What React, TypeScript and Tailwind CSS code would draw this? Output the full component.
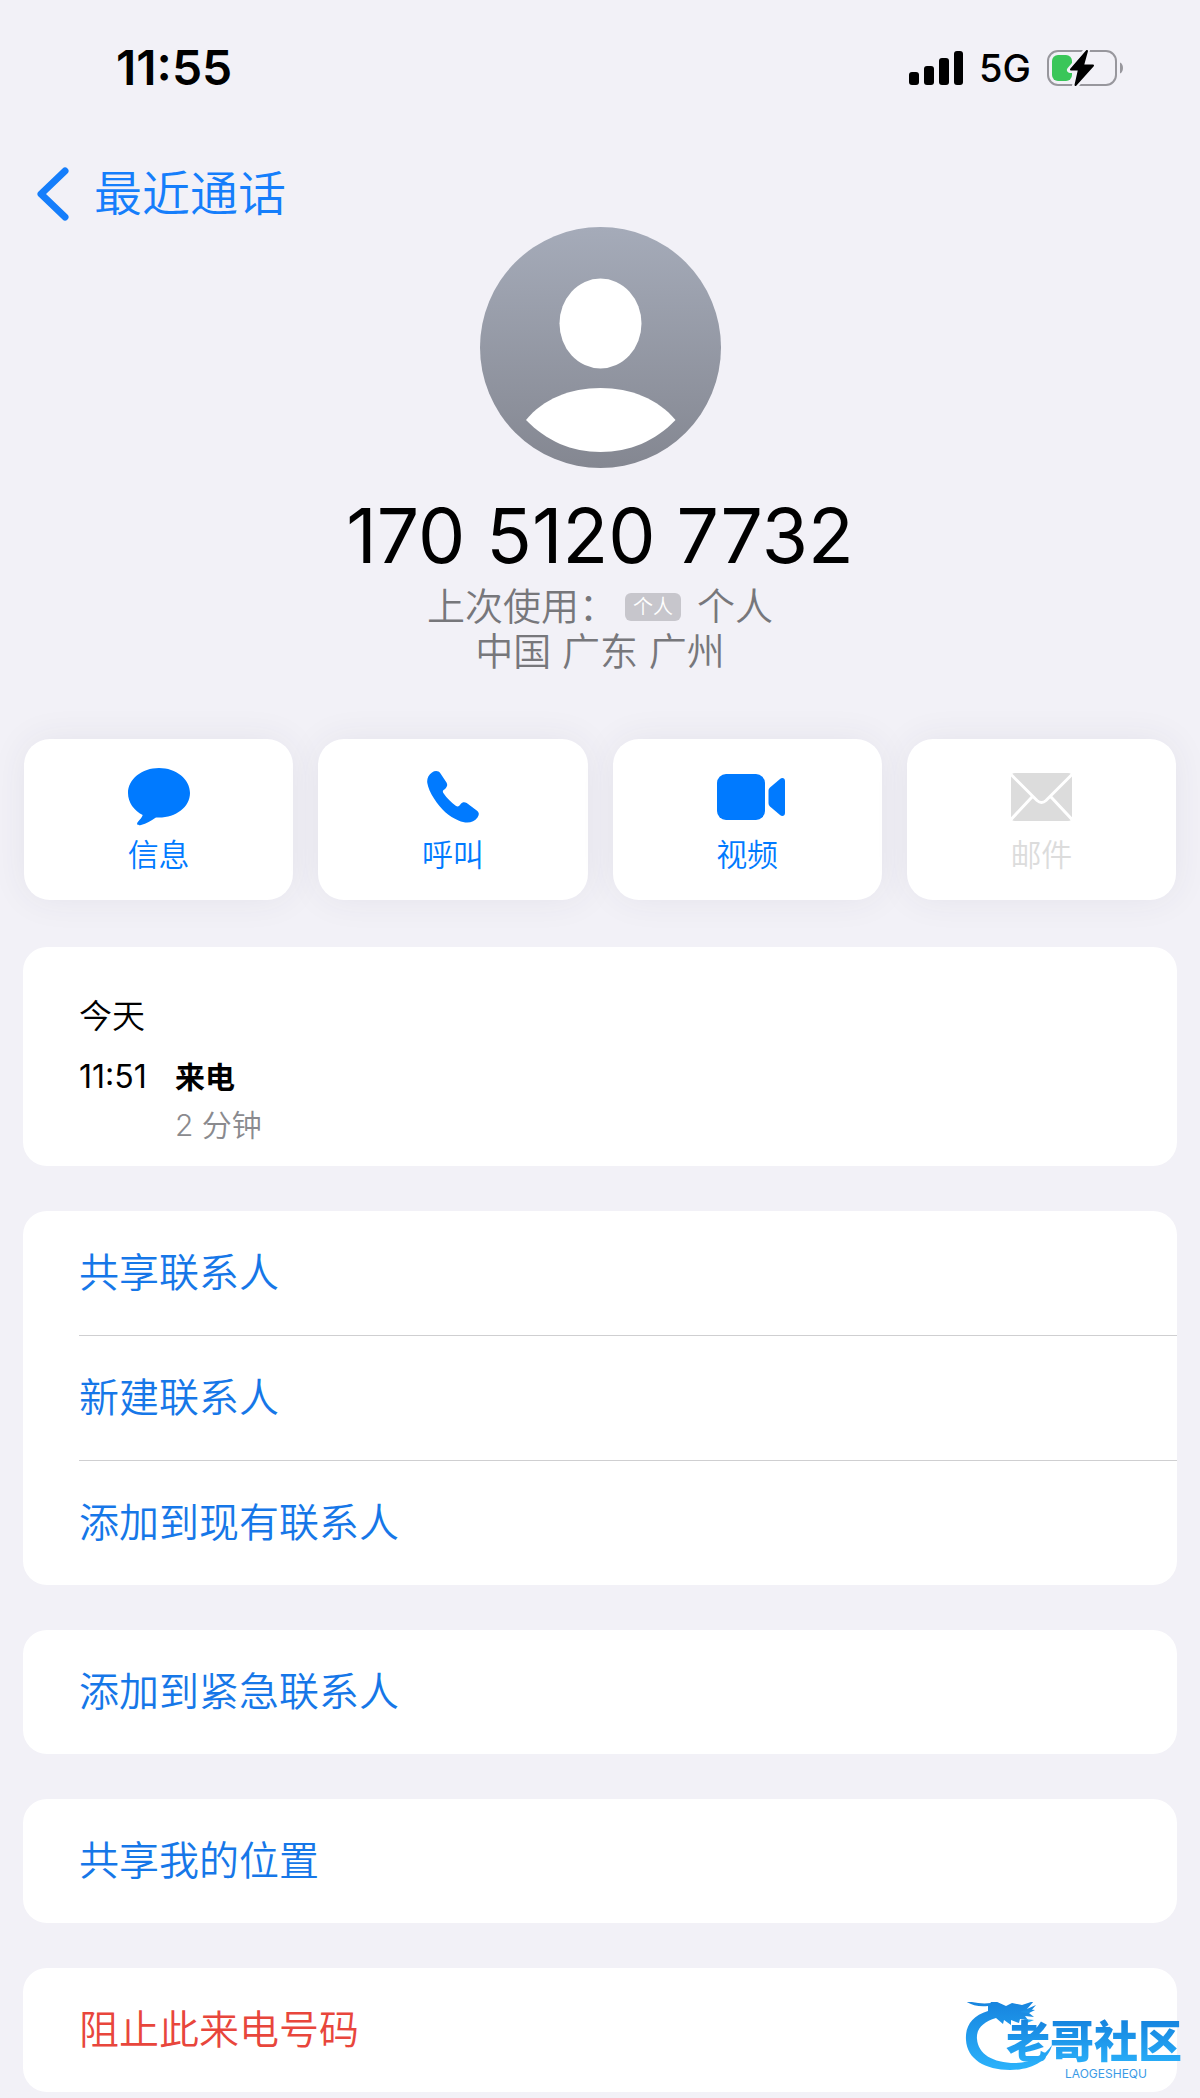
import type { ReactNode } from 'react'

type Action = {
    name: string
    icon: ReactNode
    disabled?: boolean
}

type LinkGroup = {
    items: string[]
    danger?: boolean
}

const actions: Action[] = [
    { name: '信息', icon: <MessageIcon /> },
    { name: '呼叫', icon: <PhoneIcon /> },
    { name: '视频', icon: <VideoIcon /> },
    { name: '邮件', icon: <MailIcon />, disabled: true },
]

const groups: LinkGroup[] = [
    { items: ['共享联系人', '新建联系人', '添加到现有联系人'] },
    { items: ['添加到紧急联系人'] },
    { items: ['共享我的位置'] },
    { items: ['阻止此来电号码'], danger: true },
]

function SignalIcon() {
    return (
        <svg width="54" height="35" viewBox="0 0 54 35" aria-hidden="true">
            <rect x="0" y="21" width="10" height="13" rx="3" />
            <rect x="15" y="15" width="10" height="19" rx="3" />
            <rect x="30" y="7" width="10" height="27" rx="3" />
            <rect x="45" y="0" width="9" height="34" rx="3" />
        </svg>
    )
}

function BatteryIcon() {
    return (
        <svg width="77" height="40" viewBox="0 0 77 40" aria-hidden="true">
            <rect x="1" y="3" width="68" height="34" rx="10" fill="none" stroke="#98979d" strokeWidth="2" />
            <path d="M73 14.500c4 1.500 4 9.500 0 11z" fill="#98979d" />
            <rect x="5" y="7" width="20" height="26" rx="6" fill="#3ac659" />
            <path
                d="M40 2 23 22h9l-4 16 18-21H36z"
                fill="#000"
                stroke="#f2f1f7"
                strokeWidth="6"
                strokeLinejoin="round"
                paintOrder="stroke"
            />
            <path d="M40 3 24 21.500h8L28.500 37 46 17.500H36z" stroke="#000" strokeWidth="2" strokeLinejoin="round" />
        </svg>
    )
}

function Avatar() {
    return (
        <svg width="241" height="241" viewBox="0 0 241 241" role="img" aria-label="头像">
            <defs>
                <linearGradient id="avatar" x1="0" y1="0" x2="0" y2="1">
                    <stop offset="0" stopColor="#a5abb9" />
                    <stop offset="1" stopColor="#848791" />
                </linearGradient>
            </defs>
            <circle cx="120.500" cy="120.500" r="120.500" fill="url(#avatar)" />
            <ellipse cx="120.500" cy="96.500" rx="41" ry="45" fill="#fff" />
            <path d="M46 193c17-21 44-32 74.500-32s57.500 11 75 32c-20 21-46 32-75 32s-54-11-74.500-32z" fill="#fff" />
        </svg>
    )
}

function MessageIcon() {
    return (
        <svg width="62" height="58" viewBox="0 0 62 58" fill="currentColor" aria-hidden="true">
            <path d="M31 0C48 0 62 11 62 25S48 49.500 31 49.500c-1.500 0-2.500-.2-3.500.2-4.500 3-9 6-14.500 7.300-3.500.8-5-.8-3-3.200 2-2.300 4-4.300 4.700-6.800C6 42.500 0 34.500 0 25 0 11 14 0 31 0z" />
        </svg>
    )
}

function PhoneIcon() {
    return (
        <svg width="52" height="52" viewBox="0 0 52 52" fill="currentColor" aria-hidden="true">
            <path d="M5 1.500C8-.5 11.500-.5 13.500 2.500l6 9c1.200 2 .8 4-1 6-2.500 2-3.500 2.500-1.800 5 3.300 4.700 7.300 8.800 12 12.300 2.300 1.500 3.500.5 5-1.800 1.500-2 3.800-2.500 6-1l10 7.500c2.500 2 2.800 4 .8 7-4 5.500-11 6.500-19 3C22 45.500 14 38.500 7 27.500 3.500 22 1 16.500.3 12-.3 7.500 1.500 4 5 1.500z" />
        </svg>
    )
}

function VideoIcon() {
    return (
        <svg width="76" height="46" viewBox="-8 0 76 46" fill="currentColor" aria-hidden="true">
            <rect x="0" y="0" width="48" height="46" rx="9" />
            <path d="M51.500 17c0-1.500.5-2.500 1.500-3.400L63 5c2.200-1.800 5-.8 5 2v32c0 2.800-2.800 3.800-5 2l-10-8.500c-1-.9-1.500-1.900-1.500-3.500z" />
        </svg>
    )
}

function MailIcon() {
    return (
        <svg width="61" height="48" viewBox="0 0 61 48" aria-hidden="true">
            <rect width="61" height="48" rx="4" fill="currentColor" />
            <path
                d="M0 1.500 26 27.500q4.500 4 9 0L61 1.500M0 46.500 21 24M61 46.500 40 24"
                fill="none"
                stroke="#fff"
                strokeWidth="3"
            />
        </svg>
    )
}

function DragonMark() {
    return (
        <svg width="90" height="70" viewBox="0 0 90 70" aria-hidden="true">
            <defs>
                <linearGradient id="dragon" x1="0" y1="0" x2="0" y2="1">
                    <stop offset="0" stopColor="#1580dc" />
                    <stop offset="1" stopColor="#2bb2fb" />
                </linearGradient>
            </defs>
            <g fill="url(#dragon)">
                <path d="M24 9C8 14 1 24 2 38c1 19 19 30 44 30 22 0 38-9 42-25-7 11-21 18-37 18-22 0-37-9-38-24-1-10 6-17 19-21l7 6 1-4 7 5v-5l8 3 1-4 8 1-3-4 9 1-5-4 6-3-8-1 7-8-12 4-10-2-6 3-11-5-9-6 5 8c-9 1-17 0-27-3 6 5 14 7 24 6z" />
                <path d="M56 10 72 3l-7 8zM60 17l10 1-7 3z" />
            </g>
        </svg>
    )
}

function StatusBar() {
    return (
        <div className="flex h-34 items-center justify-between pr-19 pl-29">
            <span className="text-[48px] leading-14 font-semibold">11:55</span>
            <div className="flex items-center">
                <SignalIcon />
                <span className="mr-4 ml-4 text-[38px] leading-12 font-medium">5G</span>
                <BatteryIcon />
            </div>
        </div>
    )
}

function ContactHeader() {
    return (
        <header className="flex flex-col items-center">
            <Avatar />
            <h1 className="mt-6 text-[75px] leading-[88px]">170 5120 7732</h1>
            <div className="mt-1 text-center text-[38px] leading-[45px] font-[350] text-[#77777b]">
                <p className="flex items-center justify-center">
                    上次使用：
                    <span className="mr-4 ml-2 rounded-md bg-[#c7c6cc] px-2 text-[20px] leading-7 text-white">个人</span>
                    个人
                </p>
                <p>中国 广东 广州</p>
            </div>
        </header>
    )
}

export default function App() {
    return (
        <div className="relative min-h-screen bg-[#f2f1f7] pb-[6px] font-[Inter,'Noto_Sans_CJK_SC',sans-serif] text-black">
            <StatusBar />

            <nav className="mt-6 flex h-[67px] items-center pl-9">
                <a href="#recents" className="flex items-center gap-6 text-[48px] leading-14 font-[350] text-[#157efb]">
                    <svg width="34" height="54" viewBox="0 0 34 54" fill="none" aria-hidden="true">
                        <path d="M29 4 5 27l24 23" stroke="currentColor" strokeWidth="7" strokeLinecap="round" strokeLinejoin="round" />
                    </svg>
                    最近通话
                </a>
            </nav>

            <ContactHeader />

            {/* Quick actions */}
            <div className="mt-[65px] grid grid-cols-4 gap-[25px] px-6">
                {actions.map((action) => (
                    <button
                        key={action.name}
                        type="button"
                        disabled={action.disabled}
                        className={`flex h-[161px] flex-col items-center rounded-[26px] bg-white pt-7 shadow-[0_0_36px_rgba(60,60,80,0.07)] ${action.disabled ? 'text-[#dcdcdc]' : 'text-[#007aff]'
                            }`}
                    >
                        <span className="flex h-[60px] items-center">{action.icon}</span>
                        <span className="mt-1 text-[31px] leading-12 font-[350]">{action.name}</span>
                    </button>
                ))}
            </div>

            <main className="mt-[47px] flex flex-col gap-[45px] px-[23px]">
                {/* Call history */}
                <section className="rounded-[24px] bg-white px-14 pt-11 pb-[17px]">
                    <h2 className="text-[33px] leading-[50px] font-[350]">今天</h2>
                    <div className="mt-3 flex text-[30px] leading-12">
                        <time className="w-24 text-[32px]">11:51</time>
                        <div>
                            <p className="font-bold">来电</p>
                            <p className="font-[350] text-[#8a8a8e]">2 分钟</p>
                        </div>
                    </div>
                </section>

                {groups.map((group) => (
                    <section key={group.items[0]} className="rounded-[24px] bg-white pl-14">
                        {group.items.map((item) => (
                            <button
                                key={item}
                                type="button"
                                className={`box-content block h-[124px] w-full border-b border-[#cfcfd1] text-left text-[40px] font-[350] last:border-b-0 ${group.danger ? 'text-[#e8463c]' : 'text-[#1677e8]'
                                    }`}
                            >
                                {item}
                            </button>
                        ))}
                    </section>
                ))}
            </main>

            {/* Community mark */}
            <div className="absolute right-[18px] bottom-[18px] flex items-end">
                <div className="pb-2">
                    <DragonMark />
                </div>
                <div className="-ml-12 flex flex-col items-center">
                    <span className="bg-linear-to-b from-[#1580dc] to-[#2bb2fb] bg-clip-text text-[44px] leading-[52px] font-black text-transparent">
                        老哥社区
                    </span>
                    <span className="pl-6 text-[12px] leading-3 text-[#3a9ae6]">LAOGESHEQU</span>
                </div>
            </div>
        </div>
    )
}
